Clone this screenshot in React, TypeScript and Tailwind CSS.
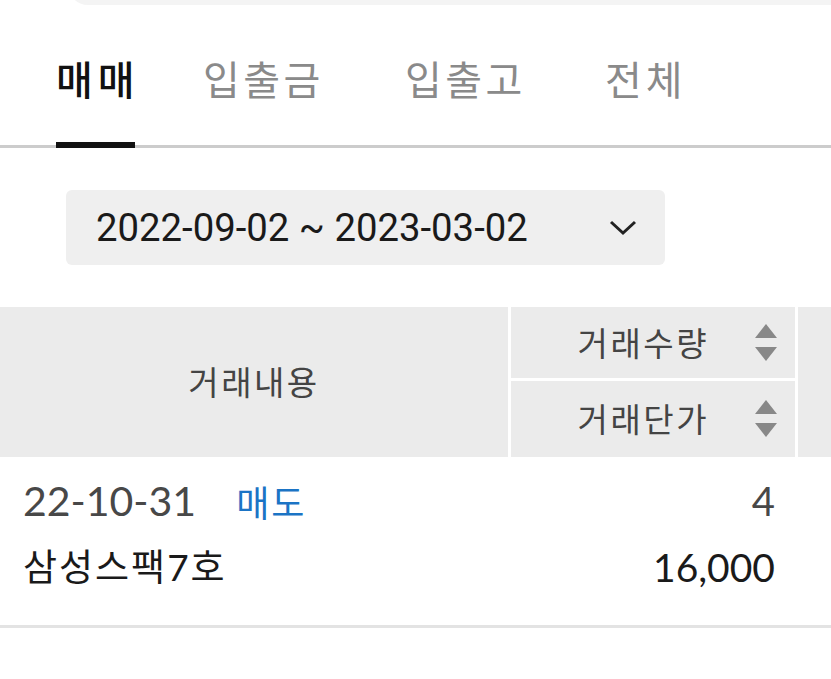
import { useState } from 'react';

const tabs = [
  { label: '매매', cls: 'ml-[56px] w-[79px] tracking-[5px]' },
  { label: '입출금', cls: 'ml-[68px] w-[120px] tracking-[3.5px]' },
  { label: '입출고', cls: 'ml-[82px] w-[120px] tracking-[3.5px]' },
  { label: '전체', cls: 'ml-[80px] w-[80px] tracking-[4px]' },
];

function SortArrows() {
  return (
    <svg width="22" height="38" viewBox="0 0 22 38" className="shrink-0">
      <polygon points="11,0 22,14 0,14" fill="#888888" />
      <polygon points="0,23 22,23 11,37" fill="#888888" />
    </svg>
  );
}

export default function App() {
  const [active, setActive] = useState(0);

  return (
    <div
      className="w-[831px] h-[679px] bg-white overflow-hidden"
      style={{ fontFamily: '"Lato", "Noto Sans CJK KR", sans-serif' }}
    >
      {/* search box bottom edge */}
      <div className="h-[5px] overflow-hidden">
        <div className="h-[40px] -mt-[35px] ml-[68px] -mr-[30px] rounded-[22px] bg-[#f4f4f4]" />
      </div>

      {/* Tabs */}
      <div className="flex items-end border-b-[3px] border-[#cccccc]">
        {tabs.map((t, i) => (
          <button
            key={t.label}
            onClick={() => setActive(i)}
            className={`relative ${t.cls} shrink-0 text-left whitespace-nowrap pt-[53px] pb-[47px] text-[40px] leading-[40px] ${
              active === i ? 'text-[#111111] font-medium' : 'text-[#8a8a8a]'
            }`}
            style={{ fontFamily: '"Noto Sans CJK KR", sans-serif' }}
          >
            {t.label}
            {active === i && (
              <span className="absolute left-0 right-0 -bottom-[3px] h-[6px] bg-[#111111]" />
            )}
          </button>
        ))}
      </div>

      {/* Date range */}
      <div className="mt-[42px] ml-[66px] w-[599px] h-[75px] rounded-md bg-[#efefef] flex items-center pl-[30px] pr-[28px]">
        <span
          className="text-[38.3px] text-[#1a1a1a] flex-1"
          style={{ fontFamily: 'Roboto, sans-serif' }}
        >
          2022-09-02 ~ 2023-03-02
        </span>
        <svg width="28" height="16" viewBox="0 0 28 16" fill="none">
          <path d="M2 2 L14 13 L26 2" stroke="#222222" strokeWidth="3" />
        </svg>
      </div>

      {/* Table header */}
      <div
        className="mt-[42px] flex h-[150px] text-[33px] tracking-[2.5px] text-[#444444]"
        style={{ fontFamily: '"Noto Sans CJK KR", sans-serif' }}
      >
        <div className="w-[508px] bg-[#ebebeb] flex items-center justify-center">거래내용</div>
        <div className="w-[3px]" />
        <div className="w-[284px] flex flex-col">
          <div className="h-[71px] bg-[#ebebeb] flex items-center justify-end gap-[46px] pr-[18px]">
            <span>거래수량</span>
            <SortArrows />
          </div>
          <div className="h-[3px]" />
          <div className="h-[76px] bg-[#ebebeb] flex items-center justify-end gap-[46px] pr-[18px]">
            <span>거래단가</span>
            <SortArrows />
          </div>
        </div>
        <div className="w-[3px]" />
        <div className="flex-1 bg-[#ebebeb]" />
      </div>

      {/* Row */}
      <div className="pt-[22px] pb-[36px] pl-[23px] pr-[56px] border-b-[3px] border-[#e3e3e3] flex flex-col gap-[22px]">
        <div className="flex items-center h-[44px]">
          <span className="text-[41px] text-[#484848]">22-10-31</span>
          <span
            className="ml-[40px] text-[36px] tracking-[2px] text-[#1b74c5]"
            style={{ fontFamily: '"Noto Sans CJK KR", sans-serif' }}
          >
            매도
          </span>
          <span className="ml-auto text-[40px] text-[#484848]">4</span>
        </div>
        <div className="flex items-center h-[44px]">
          <span className="text-[37px] tracking-[2px] text-[#1a1a1a]">삼성스팩7호</span>
          <span className="ml-auto text-[39px] text-[#1a1a1a]">16,000</span>
        </div>
      </div>
    </div>
  );
}
